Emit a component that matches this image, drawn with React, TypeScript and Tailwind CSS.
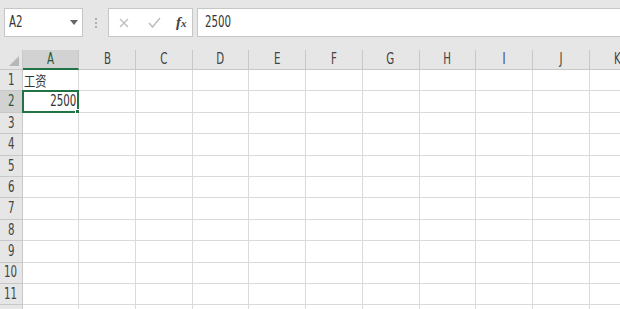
import React from "react";

const cols = ["A", "B", "C", "D", "E", "F", "G", "H", "I", "J", "K"];
const rows = [1, 2, 3, 4, 5, 6, 7, 8, 9, 10, 11, 12];

const font = "font-['DejaVu_Sans_Condensed','Liberation_Sans','Noto_Sans_CJK_SC',sans-serif]";

function Cell({ col, row }: { col: string; row: number }) {
    const selected = col === "A" && row === 2;
    return (
        <div className="relative h-[21.4px] w-[56.7px] shrink-0 border-b border-r border-[#dadada] bg-white">
            {col === "A" && row === 1 && (
                <span className="absolute left-[1px] top-[1px] inline-block origin-left scale-x-[0.8] font-['Noto_Sans_CJK_SC',sans-serif] text-[14px] leading-[18px] text-[#333]">
                    工资
                </span>
            )}
            {selected && (
                <>
                    <span className="absolute right-[2px] top-[1px] inline-block origin-right scale-x-[0.76] text-[15px] leading-[18px] text-[#333]">
                        2500
                    </span>
                    <div className="pointer-events-none absolute -left-[1px] -top-[1px] bottom-[-1px] right-[-1px] border-2 border-[#217346]" />
                    <div className="absolute -bottom-[3px] -right-[3px] h-[6px] w-[6px] border border-white bg-[#217346]" />
                </>
            )}
        </div>
    );
}

export default function App() {
    return (
        <div className={`h-[309px] w-[620px] overflow-hidden bg-white ${font}`}>
            {/* formula bar */}
            <div className="flex h-[50px] items-start bg-[#e6e6e6] pl-[4px] pt-[8px]">
                <div className="flex h-[29px] w-[79px] items-center justify-between border border-[#c6c6c6] bg-white pl-[4px] pr-[4px]">
                    <span className="inline-block origin-left scale-x-[0.76] text-[15px] text-[#333]">A2</span>
                    <svg width="8" height="5" viewBox="0 0 8 5">
                        <polygon points="0,0 8,0 4,5" fill="#666" />
                    </svg>
                </div>
                <div className="flex h-[29px] w-[25px] flex-col items-center justify-center gap-[2px]">
                    <span className="h-[2px] w-[2px] bg-[#b0b0b0]" />
                    <span className="h-[2px] w-[2px] bg-[#b0b0b0]" />
                    <span className="h-[2px] w-[2px] bg-[#b0b0b0]" />
                </div>
                <div className="flex h-[29px] w-[85px] items-center border border-[#c6c6c6] bg-white pl-[10px]">
                    <svg width="10" height="10" viewBox="0 0 10 10">
                        <path d="M1 1 L9 9 M9 1 L1 9" stroke="#bdbdbd" strokeWidth="1.3" />
                    </svg>
                    <svg width="13" height="11" viewBox="0 0 13 11" className="ml-[19px]">
                        <path d="M1 6 L4.5 10 L12 1" stroke="#bdbdbd" strokeWidth="1.5" fill="none" />
                    </svg>
                    <span className="ml-[15px] font-['Liberation_Serif',serif] text-[15px] font-semibold italic text-[#444]">
                        f<span className="text-[11px]">x</span>
                    </span>
                </div>
                <div className="ml-[4px] flex h-[29px] flex-1 items-center border border-r-0 border-[#c6c6c6] bg-white pl-[7px]">
                    <span className="inline-block origin-left scale-x-[0.76] text-[15px] text-[#333]">2500</span>
                </div>
            </div>

            {/* column headers */}
            <div className="flex h-[20px]">
                <div className="relative h-[20px] w-[22.7px] shrink-0 border-b border-r border-[#c8c8c8] bg-[#e6e6e6]">
                    <svg width="10" height="10" viewBox="0 0 10 10" className="absolute bottom-[3px] right-[3px]">
                        <polygon points="10,0 10,10 0,10" fill="#b7b7b7" />
                    </svg>
                </div>
                {cols.map((c) => (
                    <div
                        key={c}
                        className={
                            c === "A"
                                ? "flex h-[20px] w-[56.7px] shrink-0 items-center justify-center border-b-2 border-r border-b-[#217346] border-r-[#c8c8c8] bg-[#d2d2d2] text-[15px] text-[#1e5a36]"
                                : "flex h-[20px] w-[56.7px] shrink-0 items-center justify-center border-b border-r border-[#c8c8c8] bg-[#e6e6e6] text-[15px] text-[#444]"
                        }
                    >
                        <span className="inline-block scale-x-[0.76]">{c}</span>
                    </div>
                ))}
            </div>

            {/* rows */}
            {rows.map((r) => (
                <div key={r} className="flex">
                    <div
                        className={
                            r === 2
                                ? "flex h-[21.4px] w-[22.7px] shrink-0 items-center justify-center border-b border-r border-[#c8c8c8] bg-[#d2d2d2] text-[15px] text-[#1e5a36]"
                                : "flex h-[21.4px] w-[22.7px] shrink-0 items-center justify-center border-b border-r border-[#c8c8c8] bg-[#e6e6e6] text-[15px] text-[#444]"
                        }
                    >
                        {r < 12 && <span className="inline-block scale-x-[0.76]">{r}</span>}
                    </div>
                    {cols.map((c) => (
                        <Cell key={c} col={c} row={r} />
                    ))}
                </div>
            ))}
        </div>
    );
}
